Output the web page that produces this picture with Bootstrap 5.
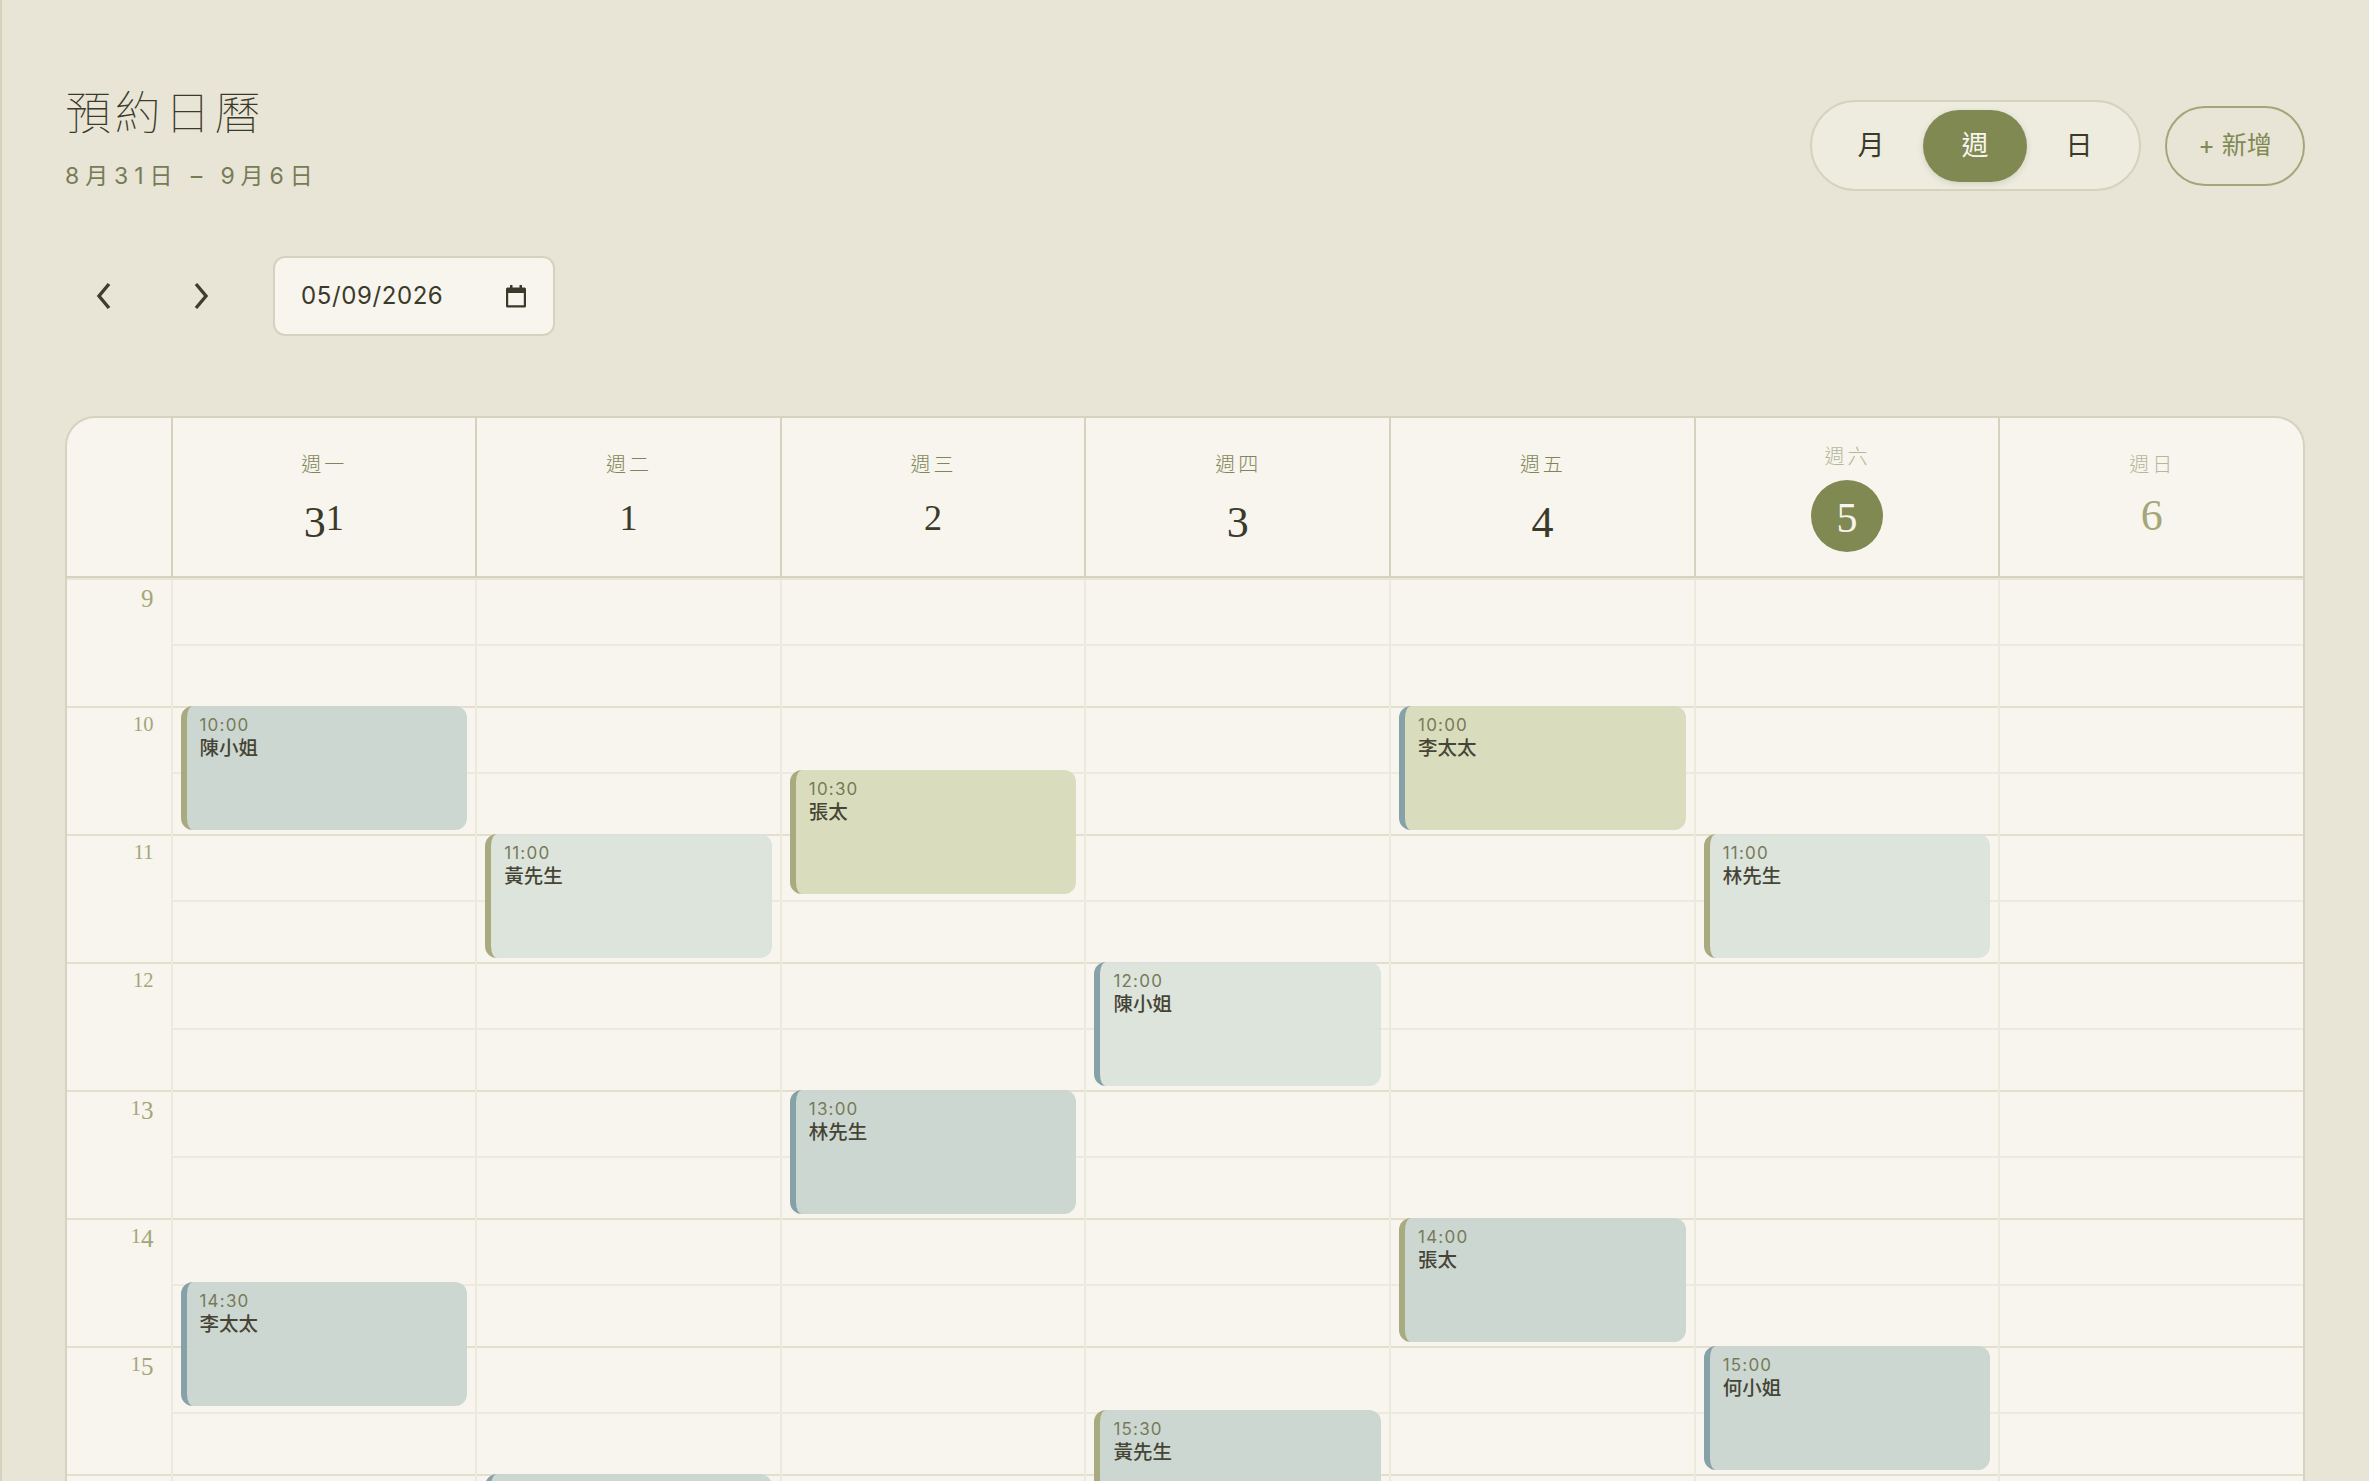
<!DOCTYPE html>
<html lang="zh-Hant">
<head>
  <meta charset="utf-8">
  <title>預約日曆</title>
  <link href="https://cdn.jsdelivr.net/npm/bootstrap@5.3.3/dist/css/bootstrap.min.css" rel="stylesheet">
  <style>
    html, body { height: 100%; overflow: hidden; }
    body {
      background-color: #e8e5d6;
      border-left: 2px solid #d5d3bd;
      color: #3a3a2a;
      font-family: Inter, "Noto Sans CJK TC", sans-serif;
    }
    .page-wrap { padding: 85px 64px 0 63px; }

    .page-title { font-size: 46px; line-height: 55px; font-weight: 100; letter-spacing: 3.8px; margin: 0 0 21px; }
    .page-sub { font-size: 23px; line-height: 30px; letter-spacing: 5.9px; color: #777c56; font-weight: 400; }

    .view-switch { height: 91px; padding: 8px 8px 7px 7.5px; margin-top: 15px; background: #eeecdf; border: 2px solid #d5d3bd; border-radius: 46px; }
    .btn-view { width: 104px; height: 72px; border: 0; border-radius: 36px; font-size: 27px; color: #3a3a2a; padding: 0; }
    .btn-view.active, .btn-view.active:hover { background: #808952; color: #f7f5ed; box-shadow: 0 2px 6px rgba(90, 90, 50, .18); }
    .btn-new { width: 140px; height: 80px; margin-left: 24px; margin-top: 21px; border: 2px solid #a4a67a; border-radius: 40px; font-size: 25px; color: #808952; padding: 0; }

    .nav-row { margin-top: 65px; margin-bottom: 80px; }
    .btn-arrow { width: 77px; height: 79px; border: 0; padding: 0; margin-right: 21px; color: #3e3e2e; }
    .date-box {
      width: 282px; height: 80px; margin-left: 12px; padding: 0 26px;
      background-color: #f7f5ed; border: 2px solid #d5d3bd; border-radius: 12px;
      font-family: Inter, sans-serif; font-size: 24px; letter-spacing: .6px; color: #3a3a2a;
    }

    .cal-wrap { background: #f7f5ed; border: 2px solid #d5d3bd; border-bottom: 0; border-radius: 30px 30px 0 0; overflow: hidden; }
    .cal-cols { display: grid; grid-template-columns: 103.5px repeat(7, 1fr); }
    .cal-head { height: 160px; border-bottom: 2px solid #d5d3bd; }
    .head-cell { height: 158px; border-left: 2px solid #d5d3bd; }
    .head-cell:first-child { border-left: 0; }
    .day-name { font-size: 20px; line-height: 28px; letter-spacing: 3px; font-weight: 300; color: #7f8658; padding-left: 1px; }
    .day-num { font-family: "Liberation Serif", serif; font-size: 44px; line-height: 56px; height: 56px; margin-top: 9px; color: #3a3a2a; }
    .num-low { font-size: .82em; }
    .num-drop { vertical-align: -.16em; }
    .is-weekend .day-name { color: #b5b79b; }
    .is-weekend .day-num { color: #a4a67a; }
    .is-today .day-name { color: #b5b79b; }
    .is-today .day-num { width: 72px; height: 72px; line-height: 76px; margin-top: 9px; border-radius: 50%; background: #808952; color: #f7f5ed; text-align: center; font-size: 42px; }

    .cal-body { border-top: 2px solid #e8e5d6; }
    .hour-row { height: 128px; border-top: 2px solid #e2dfcf; }
    .hour-row:first-child { height: 126px; border-top: 0; }
    .half-mark { height: 66px; border-bottom: 2px solid #ece9dd; }
    .hour-label { font-family: "Liberation Serif", serif; font-size: 25px; line-height: 28px; height: 28px; color: #a4a67a; text-align: right; padding: 1px 17px 0 0; }
    .day-col { position: relative; border-left: 2px solid #ece9dd; }

    .appt {
      position: absolute; left: 8px; right: 8px; height: 124px;
      padding: 9px 13px; border-left: 6px solid #a4a67a; border-radius: 12px;
      opacity: .94;
    }
    .appt-blue { background: #cbd6d1; }
    .appt-pale { background: #dce3dc; }
    .appt-green { background: #d9dcbb; }
    .bar-teal { border-left-color: #7f9ca3; }
    .appt-time { font-size: 17px; line-height: 21px; letter-spacing: 1.2px; color: #6f7350; }
    .appt-name { font-size: 19.5px; line-height: 25px; font-weight: 500; color: #3a3a2a; }
  </style>
</head>
<body>
  <div class="page-wrap">
    <div class="d-flex justify-content-between align-items-start">
      <div>
        <h1 class="page-title">預約日曆</h1>
        <div class="page-sub">8月31日 – 9月6日</div>
      </div>
      <div class="d-flex align-items-start">
        <div class="view-switch d-flex">
          <button class="btn btn-view">月</button>
          <button class="btn btn-view active">週</button>
          <button class="btn btn-view">日</button>
        </div>
        <button class="btn btn-new">+ 新增</button>
      </div>
    </div>

    <div class="nav-row d-flex align-items-center">
      <button class="btn btn-arrow" aria-label="上一週">
        <svg width="26" height="30" viewBox="0 0 26 30" fill="none" stroke="currentColor" stroke-width="3.4"><path d="M18 3 L8 15 L18 27"/></svg>
      </button>
      <button class="btn btn-arrow" aria-label="下一週">
        <svg width="26" height="30" viewBox="0 0 26 30" fill="none" stroke="currentColor" stroke-width="3.4"><path d="M7 3 L17 15 L7 27"/></svg>
      </button>
      <div class="date-box d-flex align-items-center justify-content-between">
        <span>05/09/2026</span>
        <svg width="22" height="24" viewBox="0 0 22 24"><path fill="#3a3a2a" d="M5 1h2.5v2.5h7V1H17v2.5h2.5A1.5 1.5 0 0 1 21 5v17a1.5 1.5 0 0 1-1.5 1.500h-17A1.500 1.500 0 0 1 1 22V5a1.500 1.500 0 0 1 1.500-1.500H5zM3.200 9v12.300h15.600V9z"/></svg>
      </div>
    </div>

    <div class="cal-wrap">
      <div class="cal-head cal-cols" id="calHead"></div>
      <div class="cal-body cal-cols" id="calBody"></div>
    </div>
  </div>

  <script>
    const days = [
      { name: '週一', num: '31' },
      { name: '週二', num: '1' },
      { name: '週三', num: '2' },
      { name: '週四', num: '3' },
      { name: '週五', num: '4' },
      { name: '週六', num: '5', today: true },
      { name: '週日', num: '6', weekend: true }
    ];

    const appts = [
      { day: 0, time: '10:00', who: '陳小姐', bg: 'blue' },
      { day: 0, time: '14:30', who: '李太太', bg: 'blue', teal: true },
      { day: 1, time: '11:00', who: '黃先生', bg: 'pale' },
      { day: 1, time: '16:00', bg: 'blue', teal: true, clipped: true },
      { day: 2, time: '10:30', who: '張太', bg: 'green' },
      { day: 2, time: '13:00', who: '林先生', bg: 'blue', teal: true },
      { day: 3, time: '12:00', who: '陳小姐', bg: 'pale', teal: true },
      { day: 3, time: '15:30', who: '黃先生', bg: 'blue' },
      { day: 4, time: '10:00', who: '李太太', bg: 'green', teal: true },
      { day: 4, time: '14:00', who: '張太', bg: 'blue' },
      { day: 5, time: '11:00', who: '林先生', bg: 'pale' },
      { day: 5, time: '15:00', who: '何小姐', bg: 'blue', teal: true }
    ];

    const hours = [9, 10, 11, 12, 13, 14, 15, 16];
    const hourPx = 128;

    // no old-style figures in the installed serif, so fake them digit by digit
    function oldStyle(text) {
      return String(text).split('').map(d => {
        if ('012'.includes(d)) return `<span class="num-low">${d}</span>`;
        if ('34579'.includes(d)) return `<span class="num-drop">${d}</span>`;
        return d;
      }).join('');
    }

    const headEl = document.getElementById('calHead');
    let headHtml = '<div class="head-cell"></div>';
    days.forEach(d => {
      const cls = d.today ? ' is-today' : d.weekend ? ' is-weekend' : '';
      const num = d.today ? d.num : oldStyle(d.num);
      headHtml += `
        <div class="head-cell d-flex flex-column align-items-center justify-content-center${cls}">
          <div class="day-name">${d.name}</div>
          <div class="day-num">${num}</div>
        </div>`;
    });
    headEl.innerHTML = headHtml;

    const bodyEl = document.getElementById('calBody');
    let bodyHtml = '<div>';
    hours.forEach(h => {
      // the 16 row starts at the very bottom of the window, its label is below the fold
      const label = h < 16 ? oldStyle(h) : '';
      bodyHtml += `<div class="hour-row"><div class="hour-label">${label}</div></div>`;
    });
    bodyHtml += '</div>';

    days.forEach((d, i) => {
      bodyHtml += '<div class="day-col">';
      hours.forEach(() => {
        bodyHtml += '<div class="hour-row"><div class="half-mark"></div></div>';
      });
      appts.filter(a => a.day === i).forEach(a => {
        const parts = a.time.split(':');
        const top = (Number(parts[0]) - 9 + Number(parts[1]) / 60) * hourPx - 2;
        const inner = a.clipped ? '' : `
            <div class="appt-time">${a.time}</div>
            <div class="appt-name">${a.who}</div>`;
        bodyHtml += `
          <div class="appt appt-${a.bg}${a.teal ? ' bar-teal' : ''}" style="top: ${top}px">${inner}
          </div>`;
      });
      bodyHtml += '</div>';
    });
    bodyEl.innerHTML = bodyHtml;
  </script>
  <script src="https://cdn.jsdelivr.net/npm/bootstrap@5.3.3/dist/js/bootstrap.bundle.min.js"></script>
</body>
</html>
